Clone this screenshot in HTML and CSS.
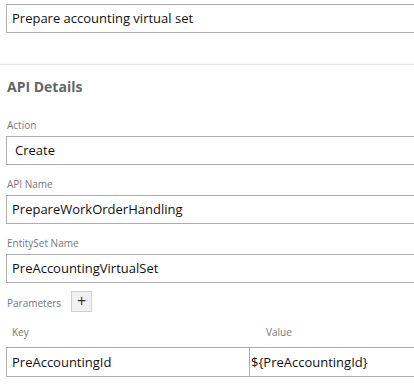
FILE: index.html
```html
<!DOCTYPE html>
<html lang="en">
<head>
    <meta charset="UTF-8">
    <meta name="viewport" content="width=device-width, initial-scale=1.0">
    <title>API Details</title>
    <link rel="stylesheet" href="styles.css">
</head>
<body>
    <div class="top">
        <div class="field-box">Prepare accounting virtual set</div>
    </div>
    <div class="section">
        <h2 class="section-title">API Details</h2>
        <div class="field first">
            <div class="field-label">Action</div>
            <div class="field-box select">Create</div>
        </div>
        <div class="field">
            <div class="field-label">API Name</div>
            <div class="field-box">PrepareWorkOrderHandling</div>
        </div>
        <div class="field">
            <div class="field-label">EntitySet Name</div>
            <div class="field-box">PreAccountingVirtualSet</div>
        </div>
        <div class="params-header">
            <span class="field-label">Parameters</span>
            <button class="add-btn" type="button">+</button>
        </div>
        <div class="param-cols">
            <div class="col-key">Key</div>
            <div class="col-value">Value</div>
        </div>
        <div class="param-row">
            <div class="param-key">PreAccountingId</div>
            <div class="param-value">${PreAccountingId}</div>
        </div>
    </div>
</body>
</html>
```

FILE: styles.css
```css
body {
    margin: 0;
    font-family: "Open Sans", "Liberation Sans", sans-serif;
    background: #fff;
    color: #111;
    overflow: hidden;
    height: 388px;
}
.top {
    padding: 4px 0 0 6px;
}
.field-box {
    box-sizing: border-box;
    height: 29px;
    border: 1px solid #adadad;
    border-right: none;
    padding: 0 5px;
    font-size: 13px;
    line-height: 27px;
    white-space: nowrap;
}
.field-box.select {
    padding-left: 8px;
}
.section {
    margin-top: 31px;
    border-top: 1px solid #e6e6e6;
    box-shadow: 0 -1px 2px rgba(0, 0, 0, 0.04);
    padding-left: 6px;
}
.section-title {
    margin: 12px 0 0 1px;
    font-size: 14px;
    font-weight: bold;
    line-height: 20px;
    color: #666;
}
.field {
    margin-top: 12px;
}
.field.first {
    margin-top: 21px;
}
.field-label {
    font-size: 10px;
    line-height: 14px;
    color: #777;
    margin: 0 0 4px 1px;
}
.params-header {
    display: flex;
    align-items: center;
    gap: 10px;
    margin-top: 8px;
}
.params-header .field-label {
    margin: 3px 0 0 1px;
}
.add-btn {
    box-sizing: border-box;
    width: 21px;
    height: 21px;
    padding: 0;
    border: 1px solid #cfcfcf;
    background: #f1f1f1;
    color: #333;
    font-family: "Open Sans", sans-serif;
    font-size: 16px;
    line-height: 17px;
}
.param-cols {
    display: flex;
    margin-top: 13px;
    font-size: 10px;
    line-height: 14px;
    color: #777;
}
.col-key {
    width: 254px;
    padding-left: 6px;
}
.param-row {
    display: flex;
    margin-top: 8px;
    height: 30px;
    border: 1px solid #adadad;
    border-right: none;
    box-sizing: border-box;
    font-size: 13px;
    line-height: 28px;
}
.param-key {
    width: 243px;
    padding-left: 5px;
    box-sizing: border-box;
    border-right: 1px solid #adadad;
}
.param-value {
    padding-left: 1px;
    white-space: nowrap;
}
```
